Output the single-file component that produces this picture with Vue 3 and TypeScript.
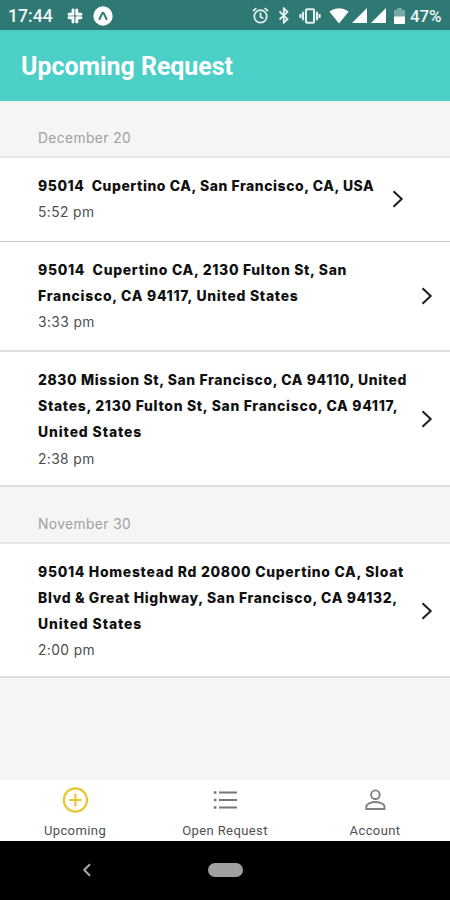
<script setup lang="ts">
interface Line {
  text: string
  spacing: number
}
interface Request {
  lines: Line[]
  time: string
  kind: string
}
interface Section {
  date: string
  requests: Request[]
}

const sections: Section[] = [
  {
    date: 'December 20',
    requests: [
      {
        lines: [{ text: '95014  Cupertino CA, San Francisco, CA, USA', spacing: 0.58 }],
        time: '5:52 pm',
        kind: 'single',
      },
      {
        lines: [
          { text: '95014  Cupertino CA, 2130 Fulton St, San', spacing: 0.71 },
          { text: 'Francisco, CA 94117, United States', spacing: 0.75 },
        ],
        time: '3:33 pm',
        kind: 'double',
      },
      {
        lines: [
          { text: '2830 Mission St, San Francisco, CA 94110, United', spacing: 0.63 },
          { text: 'States, 2130 Fulton St, San Francisco, CA 94117,', spacing: 0.72 },
          { text: 'United States', spacing: 0.9 },
        ],
        time: '2:38 pm',
        kind: 'last',
      },
    ],
  },
  {
    date: 'November 30',
    requests: [
      {
        lines: [
          { text: '95014 Homestead Rd 20800 Cupertino CA, Sloat', spacing: 0.71 },
          { text: 'Blvd & Great Highway, San Francisco, CA 94132,', spacing: 0.67 },
          { text: 'United States', spacing: 0.9 },
        ],
        time: '2:00 pm',
        kind: 'last',
      },
    ],
  },
]
</script>

<template>
  <div class="screen">
    <div class="status">
      <span class="clock">17:44</span>
      <svg class="slack" width="16" height="16" viewBox="0 0 16 16" fill="none" stroke="#fff" stroke-width="2.9" stroke-linecap="round">
        <path d="M6 2v4.4M2 6.3h2.3M9.8 2v4.4M11.8 6.3H14M2 9.8h4.2M6 12v2M9.8 9.8H14M9.8 11.5V14" />
      </svg>
      <svg class="expo" width="20" height="20" viewBox="0 0 20 20">
        <circle cx="10" cy="10" r="9.7" fill="#fff" />
        <path d="M6.5 13.2 9.2 7.4q.8-1.2 1.6 0l2.7 5.8" fill="none" stroke="#2f7974" stroke-width="2" stroke-linecap="round" />
      </svg>
      <svg class="alarm" width="17" height="17" viewBox="0 0 17 17" fill="none" stroke="#e6f2f1" stroke-width="1.7">
        <circle cx="8.5" cy="9.4" r="6.2" />
        <path d="M8.5 5.6v4.1l2.8 1.7M1 4l3.4-2.9M16 4l-3.4-2.9" />
      </svg>
      <svg class="bluetooth" width="12" height="17" viewBox="0 0 12 17" fill="none" stroke="#e6f2f1" stroke-width="1.8">
        <path d="m1.5 4.5 8 7.7-3.7 3.4V1.4l3.7 3.4-8 7.7" />
      </svg>
      <svg class="vibrate" width="22" height="16" viewBox="0 0 22 16" fill="none" stroke="#e6f2f1">
        <rect x="7" y="1.3" width="8" height="13.4" rx="1" stroke-width="2" />
        <path d="M4 3.8v8.4M18 3.8v8.4" stroke-width="2.2" />
        <path d="M1.4 6v4M20.6 6v4" stroke-width="2" />
      </svg>
      <svg class="wifi" width="20" height="16" viewBox="0 0 20 16">
        <path d="M.3 3.5Q10-3.2 19.7 3.5L10 15.5z" fill="#fff" />
      </svg>
      <svg class="signal" width="15" height="15" viewBox="0 0 15 15"><path d="M15 0v15H0z" fill="#fff" /></svg>
      <svg class="signal second" width="15" height="15" viewBox="0 0 15 15"><path d="M15 0v15H0z" fill="#fff" /></svg>
      <svg class="battery" width="11" height="16" viewBox="0 0 11 16">
        <path d="M0 2h3V0h5v2h3v7H0z" fill="#76a8a4" />
        <path d="M0 8.5h11V15q0 1-1 1H1q-1 0-1-1z" fill="#fff" />
      </svg>
      <span class="percent">47%</span>
    </div>

    <header class="header"><h1>Upcoming Request</h1></header>

    <main class="list">
      <section v-for="section in sections" :key="section.date">
        <h2 class="date">{{ section.date }}</h2>
        <article
          v-for="(request, i) in section.requests"
          :key="i"
          class="request"
          :class="request.kind"
        >
          <div class="copy">
            <div
              v-for="line in request.lines"
              :key="line.text"
              class="address"
            ><span :style="{ letterSpacing: line.spacing + 'px' }">{{ line.text }}</span></div>
            <div class="time">{{ request.time }}</div>
          </div>
          <svg class="chevron" width="12" height="18" viewBox="0 0 12 18" fill="none" stroke="#1c1c1c" stroke-width="2">
            <path d="m1.5 1.2 8.2 7.8-8.2 7.8" />
          </svg>
        </article>
      </section>
    </main>

    <nav class="tabs">
      <div class="tab">
        <svg width="28" height="28" viewBox="0 0 28 28" fill="none" stroke="#ebc52f" stroke-width="2.2">
          <circle cx="14.4" cy="14" r="11.6" />
          <path d="M14.4 7.8v12.4M8.2 14h12.4" />
        </svg>
        <span class="upcoming">Upcoming</span>
      </div>
      <div class="tab">
        <svg width="28" height="28" viewBox="0 0 28 28" fill="none" stroke="#777" stroke-width="2">
          <path d="M8 6.5h18M8 14h18M8 21.5h18" />
          <path d="M2.8 6.5h2.6M2.8 14h2.6M2.8 21.5h2.6" stroke-width="2.4" />
        </svg>
        <span class="open">Open Request</span>
      </div>
      <div class="tab">
        <svg width="28" height="28" viewBox="0 0 28 28" fill="none" stroke="#808080" stroke-width="1.9">
          <circle cx="14.4" cy="8.7" r="4.3" />
          <path d="M5.3 23v-2.4c0-3 6-4.6 9.1-4.6s9.1 1.6 9.1 4.6V23z" />
        </svg>
        <span class="account">Account</span>
      </div>
    </nav>

    <div class="system">
      <svg class="back" width="10" height="14" viewBox="0 0 10 14" fill="none" stroke="#aaa" stroke-width="2">
        <path d="M8 1.2 2.2 7 8 12.8" />
      </svg>
      <span class="pill"></span>
    </div>
  </div>
</template>

<style>
body {
  margin: 0;
}
</style>

<style scoped>
.screen {
  width: 450px;
  height: 900px;
  display: flex;
  flex-direction: column;
  overflow: hidden;
  background: #f5f5f5;
  font-family: Roboto, "Liberation Sans", sans-serif;
}
.status {
  height: 30px;
  flex: none;
  display: flex;
  align-items: center;
  box-sizing: border-box;
  padding: 1px 6px 0 8px;
  background: #2f7974;
  color: #eef6f5;
}
.status svg {
  flex: none;
}
.clock {
  width: 59px;
  font-size: 17.6px;
  font-weight: 500;
}
.expo {
  margin-left: 10px;
}
.alarm {
  margin-left: auto;
}
.bluetooth {
  margin-left: 9px;
}
.vibrate {
  margin-left: 9px;
}
.wifi {
  margin-left: 8px;
}
.signal {
  margin-left: 3px;
}
.second {
  margin-left: 4px;
}
.battery {
  margin-left: 8px;
}
.percent {
  margin-left: 5px;
  width: 34px;
  font-size: 17px;
  font-weight: 500;
  letter-spacing: -0.1px;
}
.header {
  height: 70.5px;
  flex: none;
  display: flex;
  align-items: center;
  box-sizing: border-box;
  padding: 4px 21px 0;
  background: #4ccfc6;
}
h1 {
  margin: 0;
  color: #fff;
  font-size: 24.9px;
  font-weight: 700;
  line-height: 30px;
  white-space: nowrap;
}
.list {
  flex: 1;
  font-family: Inter, Roboto, sans-serif;
}
.date {
  height: 57px;
  box-sizing: border-box;
  margin: 0;
  padding: 24px 38px 0;
  border-bottom: 2px solid #e6e6e6;
  color: #a0a0a0;
  font-size: 13.8px;
  font-weight: 400;
  line-height: 26px;
  letter-spacing: 0.4px;
}
.request {
  display: flex;
  align-items: center;
  padding: 15px 17px 13.5px 38px;
  border-bottom: 2px solid #dedede;
  background: #fff;
}
.single {
  padding-right: 46px;
  padding-bottom: 16px;
  border-bottom: 1px solid #c4c4c4;
}
.double {
  padding-bottom: 14.5px;
}
.last {
  padding-bottom: 13px;
}
.copy {
  flex: 1;
  min-width: 0;
}
.address,
.time {
  height: 26.2px;
  line-height: 26.2px;
  white-space: pre;
}
.address {
  color: #111;
  font-size: 13.9px;
  font-weight: 800;
}
.time {
  color: #4c4c4c;
  font-size: 13.8px;
  letter-spacing: 0.4px;
}
.chevron {
  flex: none;
}
.tabs {
  height: 60.5px;
  flex: none;
  display: grid;
  grid-template-columns: repeat(3, 1fr);
  background: #fff;
}
.tab {
  display: flex;
  flex-direction: column;
  align-items: center;
  padding-top: 6px;
  color: #505050;
  font-size: 13px;
  line-height: 16px;
}
.tab span {
  margin-top: 9px;
  letter-spacing: 0.4px;
  white-space: nowrap;
}
.system {
  height: 59.5px;
  flex: none;
  display: flex;
  align-items: center;
  background: #000;
}
.back {
  margin-left: 82px;
}
.pill {
  width: 35px;
  height: 14px;
  margin-left: 116px;
  border-radius: 7px;
  background: #a0a0a0;
}
</style>
